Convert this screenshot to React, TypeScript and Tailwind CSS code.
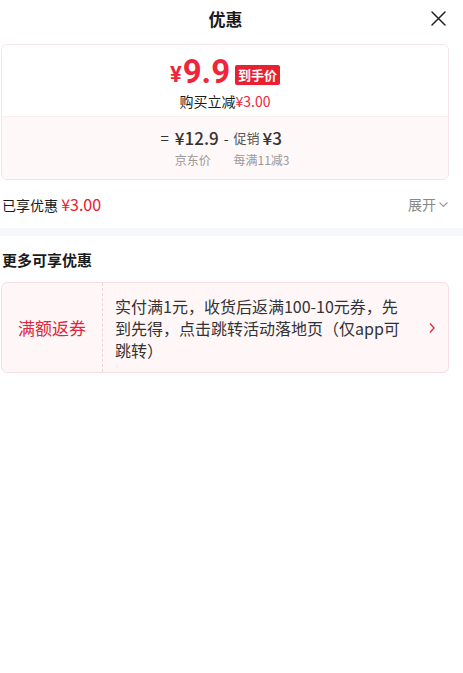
import React from "react";

const font = { fontFamily: '"Noto Sans CJK SC", "Noto Sans", sans-serif' };
const numFont = { fontFamily: 'Roboto, "Noto Sans", sans-serif' };

export default function App() {
  return (
    <div className="w-[463px] h-[673px] bg-white text-[#1a1a1a]" style={font}>
      <div className="w-[450px] pl-[1px]">
        {/* header */}
        <div className="relative h-[40px] flex items-center justify-center">
          <span className="text-[17px] font-bold text-[#1a1a1a] mt-[-2px]">优惠</span>
          <svg className="absolute right-[3px] top-[10px]" width="17" height="17" viewBox="0 0 17 17">
            <path d="M2 2 L15 15 M15 2 L2 15" stroke="#222" strokeWidth="1.5" strokeLinecap="round" />
          </svg>
        </div>

        {/* price card */}
        <div className="mt-[4px] w-[448px] h-[136px] rounded-[6px] border border-[#f6e4e8] overflow-hidden">
          <div className="h-[71px] bg-white flex flex-col items-center">
            <div className="flex items-end mt-[11px] h-[32px]">
              <span className="text-[#f0243b] font-bold text-[22px] leading-[24px] mb-[1px]" style={numFont}>¥</span>
              <span className="text-[#f0243b] font-bold text-[33px] leading-[32px] ml-[1px]" style={numFont}>9.9</span>
              <span className="ml-[5px] mb-[3px] bg-[#e8202f] text-white font-bold text-[13px] leading-[20px] px-[3px] rounded-[2px]">到手价</span>
            </div>
            <div className="mt-[4px] text-[14px] leading-[18px] text-[#1a1a1a]">
              购买立减<span className="text-[#f0243b]">¥3.00</span>
            </div>
          </div>
          <div className="h-[65px] bg-[#fff8f8] border-t border-[#fbeeee] flex justify-center">
            <div className="flex items-start mt-[9px] text-[#333]">
              <span className="text-[15px] leading-[24px] mr-[6px]">=</span>
              <div className="flex flex-col">
                <span className="text-[17px] leading-[24px] font-medium">¥12.9</span>
                <span className="text-[12px] leading-[18px] text-[#999] mt-[1px]">京东价</span>
              </div>
              <span className="text-[14px] leading-[24px] mx-[5px]">-</span>
              <div className="flex flex-col">
                <div className="flex items-center h-[24px]">
                  <span className="text-[13px] text-[#555] mr-[3px]">促销</span>
                  <span className="text-[17px] font-medium">¥3</span>
                </div>
                <span className="text-[12px] leading-[18px] text-[#999] mt-[1px]">每满11减3</span>
              </div>
            </div>
          </div>
        </div>

        {/* enjoyed */}
        <div className="h-[48px] flex items-center justify-between pl-[1px] pr-[1px]">
          <span className="text-[14px]">
            已享优惠 <span className="text-[#e8202f] text-[16px]">¥3.00</span>
          </span>
          <span className="flex items-center text-[14px] text-[#888]">
            展开
            <svg className="ml-[2px]" width="11" height="11" viewBox="0 0 11 11">
              <path d="M1.5 3.5 L5.5 7.5 L9.5 3.5" stroke="#999" strokeWidth="1.1" fill="none" />
            </svg>
          </span>
        </div>
      </div>

      <div className="h-[8px] bg-[#f6f7fb]" />

      <div className="w-[450px] pl-[1px]">
        <div className="h-[44px] flex items-center pl-[1px] mt-[2px]">
          <span className="text-[15px] font-bold text-[#1a1a1a]">更多可享优惠</span>
        </div>
        <div className="w-[448px] h-[91px] rounded-[6px] border border-[#f5dfe4] bg-[#fff6f7] flex items-center">
          <div className="w-[101px] h-full flex items-center justify-center border-r border-dashed border-[#ebd3d8]">
            <span className="text-[17px] text-[#e0253e]">满额返券</span>
          </div>
          <div className="flex-1 pl-[12px] pr-[18px] text-[16px] leading-[22px] text-[#333]">
            实付满1元，收货后返满100-10元券，先到先得，点击跳转活动落地页（仅app可跳转）
          </div>
          <svg className="mr-[12px] shrink-0" width="8" height="12" viewBox="0 0 8 12">
            <path d="M2 1.5 L6 6 L2 10.5" stroke="#d9334b" strokeWidth="1.4" fill="none" />
          </svg>
        </div>
      </div>
    </div>
  );
}
